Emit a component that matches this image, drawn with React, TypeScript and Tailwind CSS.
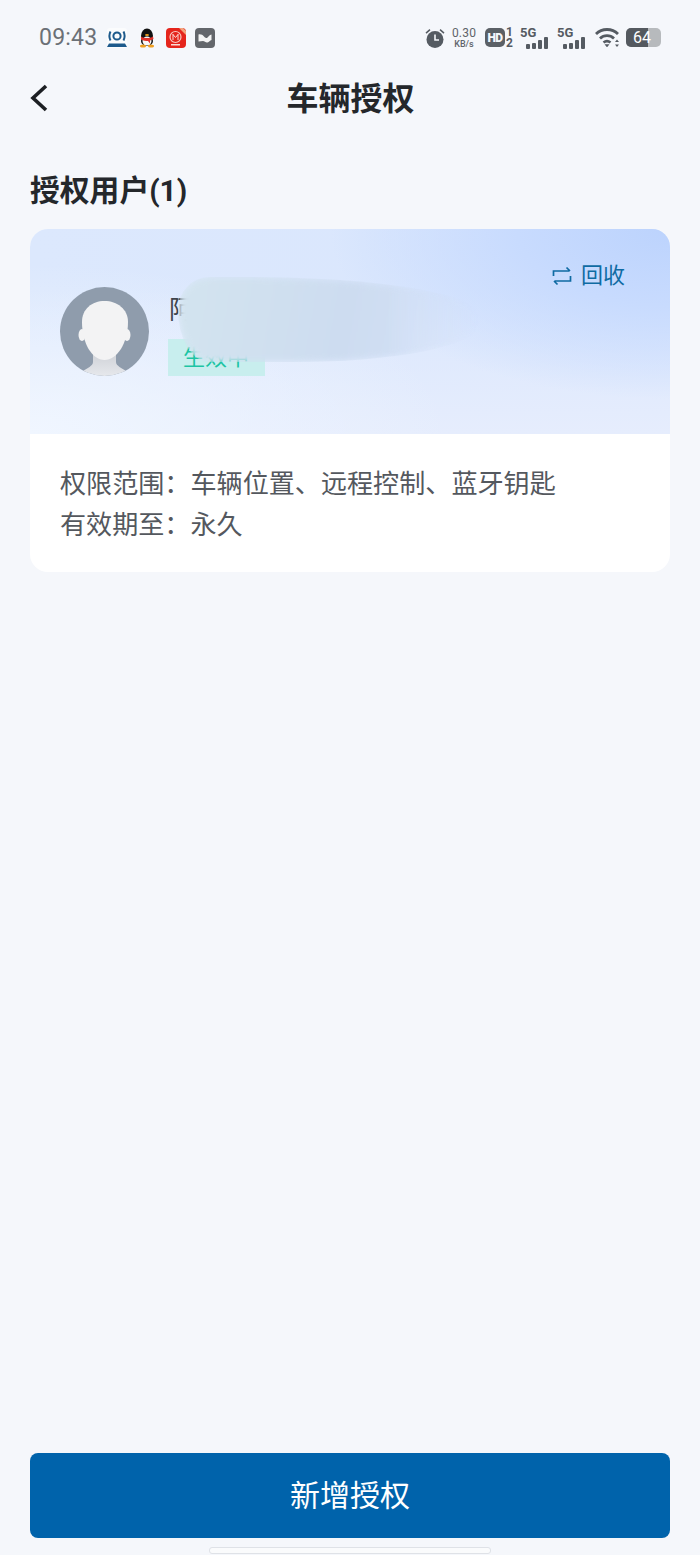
const CJK = "font-['Roboto','Noto_Sans_CJK_SC',sans-serif]";

function SignalBars() {
  return (
    <svg width="23" height="12" viewBox="0 0 23 12" fill="#555b62">
      <rect x="0" y="7" width="4" height="5" rx="1" />
      <rect x="6" y="6" width="4" height="6" rx="1" />
      <rect x="12" y="3" width="4" height="9" rx="1" />
      <rect x="18" y="0" width="4" height="12" rx="1" />
    </svg>
  );
}

function Net5G() {
  return (
    <div className="relative h-[26px] w-[29px]">
      <span className="absolute left-0 top-[1px] text-[13px] font-bold leading-[14px] text-[#555b62]">5G</span>
      <div className="absolute bottom-[2px] right-0">
        <SignalBars />
      </div>
    </div>
  );
}

function StatusBar() {
  return (
    <div className="flex h-[75px] items-center justify-between pl-[39px] pr-[39px]">
      <div className="flex items-center">
        <span className="w-[59px] text-[23px] leading-none tracking-[0.2px] text-[#6b7076]">09:43</span>
        {/* app notification icons */}
        <svg className="ml-[9px]" width="20" height="20" viewBox="0 0 20 20">
          <rect width="20" height="20" rx="3" fill="#fbfcfd" />
          <path d="M2 15.500h16l2 3.500H0z" fill="#1d5a8c" />
          <circle cx="10" cy="8" r="3.600" fill="none" stroke="#1d5a8c" strokeWidth="2" />
          <path d="M3.500 3.500c-1.500 3-1.500 6 0 9M16.500 3.500c1.500 3 1.500 6 0 9" fill="none" stroke="#1d5a8c" strokeWidth="2" />
        </svg>
        <svg className="ml-[10px]" width="20" height="20" viewBox="0 0 20 20">
          <ellipse cx="10" cy="8" rx="6" ry="7.500" fill="#111" />
          <ellipse cx="10" cy="13" rx="6" ry="5" fill="#111" />
          <ellipse cx="10" cy="13" rx="4.500" ry="4.500" fill="#f7f7f7" />
          <path d="M4 8.500c3 2 9 2 12 0l.5 2.500-3.500 1.500 0 3-2-2.500c-2 0-5-.5-7-1.500z" fill="#e0322b" />
          <ellipse cx="6" cy="18" rx="3" ry="1.500" fill="#f0a020" />
          <ellipse cx="14" cy="18" rx="3" ry="1.500" fill="#f0a020" />
          <ellipse cx="10" cy="7" rx="2" ry="1" fill="#f0a020" />
        </svg>
        <svg className="ml-[9px]" width="20" height="20" viewBox="0 0 20 20">
          <rect width="20" height="20" rx="4" fill="#e5251c" />
          <circle cx="9.500" cy="9" r="5.500" fill="none" stroke="#f8c9c0" strokeWidth="1.200" />
          <path d="M7 6v6M12 6v6M7 6.500l2.500 3 2.500-3" fill="none" stroke="#fbdcd6" strokeWidth="1" />
          <rect x="5" y="16" width="9" height="1.500" fill="#fbdcd6" />
          <path d="M13 0h4l3 3v4z" fill="#f2a37c" />
        </svg>
        <svg className="ml-[9px]" width="20" height="20" viewBox="0 0 20 20">
          <rect width="20" height="20" rx="4" fill="#63666b" />
          <path d="M3.500 6.500c2.500-.5 4 .5 5.500 2s2.500 2 3.500 1 2-2.500 4-3v5.500c-1.500.5-2.500 2-4 2.500s-3-1.500-4.500-1.500-3 .5-4.500.5z" fill="#f4f4f4" />
        </svg>
      </div>
      <div className="flex items-center">
        <svg width="22" height="22" viewBox="0 0 22 22" fill="#555b62">
          <circle cx="11" cy="12.500" r="8.500" />
          <path d="M1.500 5.500l4-3.500 1 1.200-4 3.500zM20.500 5.500l-4-3.500-1 1.200 4 3.500z" />
          <path d="M11 7.500v5.500h4" fill="none" stroke="#f5f7fb" strokeWidth="1.600" />
        </svg>
        <div className="ml-[5px] flex w-[26px] flex-col items-center leading-none text-[#5f646a]">
          <span className="text-[12px] leading-[12px] tracking-[0.2px]">0.30</span>
          <span className="text-[9px] font-medium leading-[10px]">KB/s</span>
        </div>
        <div className="ml-[8px] flex h-[19px] w-[20px] items-center justify-center rounded-[5px] bg-[#5b6066] text-[12px] font-black leading-none tracking-[-0.5px] text-[#f5f7fb]">
          HD
        </div>
        <div className="ml-[1px] flex w-[7px] flex-col items-center text-[12px] font-bold leading-[11px] text-[#555b62]">
          <span>1</span>
          <span>2</span>
        </div>
        <div className="ml-[7px]">
          <Net5G />
        </div>
        <div className="ml-[8px]">
          <Net5G />
        </div>
        <svg className="ml-[9px]" width="25" height="21" viewBox="0 0 25 21" fill="none" stroke="#555b62" strokeWidth="2.800">
          <path d="M1 7c6-6 16-6 22 0" />
          <path d="M5 11.500c4-3.800 10-3.800 14 0" />
          <path d="M8.500 15.500c2-1.500 5-1.500 7 0" />
          <path d="M12 20l-2-2.500h4z" fill="#555b62" strokeWidth="0.500" />
          <path d="M22 12.500l2 2.500h-4zM22 20l2-2.500h-4z" fill="#555b62" stroke="none" />
        </svg>
        <div className="relative ml-[6px] flex h-[19px] w-[35px] items-center overflow-hidden rounded-[5px] bg-[#b7babd]">
          <div className="h-full w-[22px] bg-[#54595f]" />
          <span className="absolute left-[7px] text-[16px] leading-none text-white">64</span>
        </div>
      </div>
    </div>
  );
}

function Avatar() {
  return (
    <svg className="shrink-0" width="89" height="89" viewBox="0 0 89 89">
      <defs>
        <clipPath id="avatar-clip">
          <circle cx="44.500" cy="44.500" r="44.500" />
        </clipPath>
        <linearGradient id="avatar-neck" x1="0" y1="0" x2="0" y2="1">
          <stop offset="0" stopColor="#c9ccd2" />
          <stop offset="1" stopColor="#e6e8ec" />
        </linearGradient>
      </defs>
      <g clipPath="url(#avatar-clip)">
        <rect width="89" height="89" fill="#8f9cac" />
        <path d="M33 60h23v15c0 4 6 6 10 9v5H23v-5c4-3 10-5 10-9z" fill="url(#avatar-neck)" />
        <ellipse cx="22" cy="48" rx="3.500" ry="6" fill="#f3f3f4" />
        <ellipse cx="67" cy="48" rx="3.500" ry="6" fill="#f3f3f4" />
        <path d="M22 35c0-13 10-21 22.500-21S68 22 68 35c0 21-11 38-23.500 38S22 56 22 35z" fill="#f3f3f4" />
      </g>
    </svg>
  );
}

function AuthCard() {
  return (
    <div className="mt-[18px] overflow-hidden rounded-[18px] bg-white">
      <div className="relative h-[205px] overflow-hidden bg-[radial-gradient(ellipse_340px_170px_at_100%_0%,#bcd3fd_0%,#c8dbfe_45%,rgba(205,223,254,0)_100%),radial-gradient(ellipse_420px_170px_at_0%_100%,#f0f6ff_0%,rgba(240,246,255,0)_100%),linear-gradient(180deg,rgba(230,237,253,0)_30%,#e6edfd_100%),linear-gradient(90deg,#dce8fd_0%,#d9e6fd_100%)]">
        <div className="flex items-start pl-[30px] pt-[58px]">
          <Avatar />
          <div className="ml-[19px] flex flex-col items-start">
            <span className="ml-[1px] h-[52px] text-[26px] leading-[46px] text-[#3f454c]">阿</span>
            <div className="flex h-[37px] w-[97px] items-center bg-[#c8eeee] pl-[15px] text-[22px] leading-none text-[#1dc4a4]">
              生效中
            </div>
          </div>
        </div>
        {/* smear that hides the user's name */}
        <div className="absolute left-[148px] top-[48px] h-[85px] w-[300px] rounded-[12%_88%_70%_12%/45%_50%_50%_70%] bg-[linear-gradient(100deg,#d3e4ef_0%,#cddcf0_55%,#d4e1f8_100%)] blur-[3px] [mask-image:linear-gradient(90deg,#000_70%,transparent)]" />
        <div className="absolute right-[45px] top-[34px] flex items-center text-[#0f6ba3]">
          <svg width="20" height="20" viewBox="0 0 20 20" fill="none" stroke="currentColor" strokeWidth="1.700">
            <path d="M1.500 10V5h16M14.500 1.500L18 5" />
            <path d="M18.500 10v5h-16M5.500 18.500L2 15" />
          </svg>
          <span className="ml-[9px] text-[22px] leading-[26px]">回收</span>
        </div>
      </div>
      <div className="px-[30px] pb-[26px] pt-[30px] text-[26.100px] leading-[41px] text-[#54585e]">
        <div>权限范围：车辆位置、远程控制、蓝牙钥匙</div>
        <div>有效期至：永久</div>
      </div>
    </div>
  );
}

export default function App() {
  return (
    <div className={`${CJK} flex h-[1555px] w-[700px] flex-col overflow-hidden bg-[#f5f7fb]`}>
      <StatusBar />
      <div className="relative flex h-[46px] items-center justify-center">
        <svg className="absolute left-[28px] top-[8px]" width="22" height="30" viewBox="0 0 22 30" fill="none" stroke="#1c1f23" strokeWidth="3.600">
          <path d="M18 3L5 15l13 12" />
        </svg>
        <span className="pl-[1px] pt-[2px] text-[32px] font-bold leading-none text-[#24272b]">车辆授权</span>
      </div>
      <div className="px-[30px]">
        <h2 className="mt-[50px] text-[29.800px] font-bold leading-[40px] text-[#24272b]">授权用户(1)</h2>
        <AuthCard />
      </div>
      <div className="mt-auto px-[30px]">
        <button className="flex h-[85px] w-full items-center justify-center rounded-[8px] bg-[#0063ab] text-[30px] text-white">
          新增授权
        </button>
      </div>
      <div className="mx-auto mb-px mt-[9px] h-[7px] w-[282px] rounded-[3px] border border-[#dfe2e7] bg-[#fafbfc]" />
    </div>
  );
}
